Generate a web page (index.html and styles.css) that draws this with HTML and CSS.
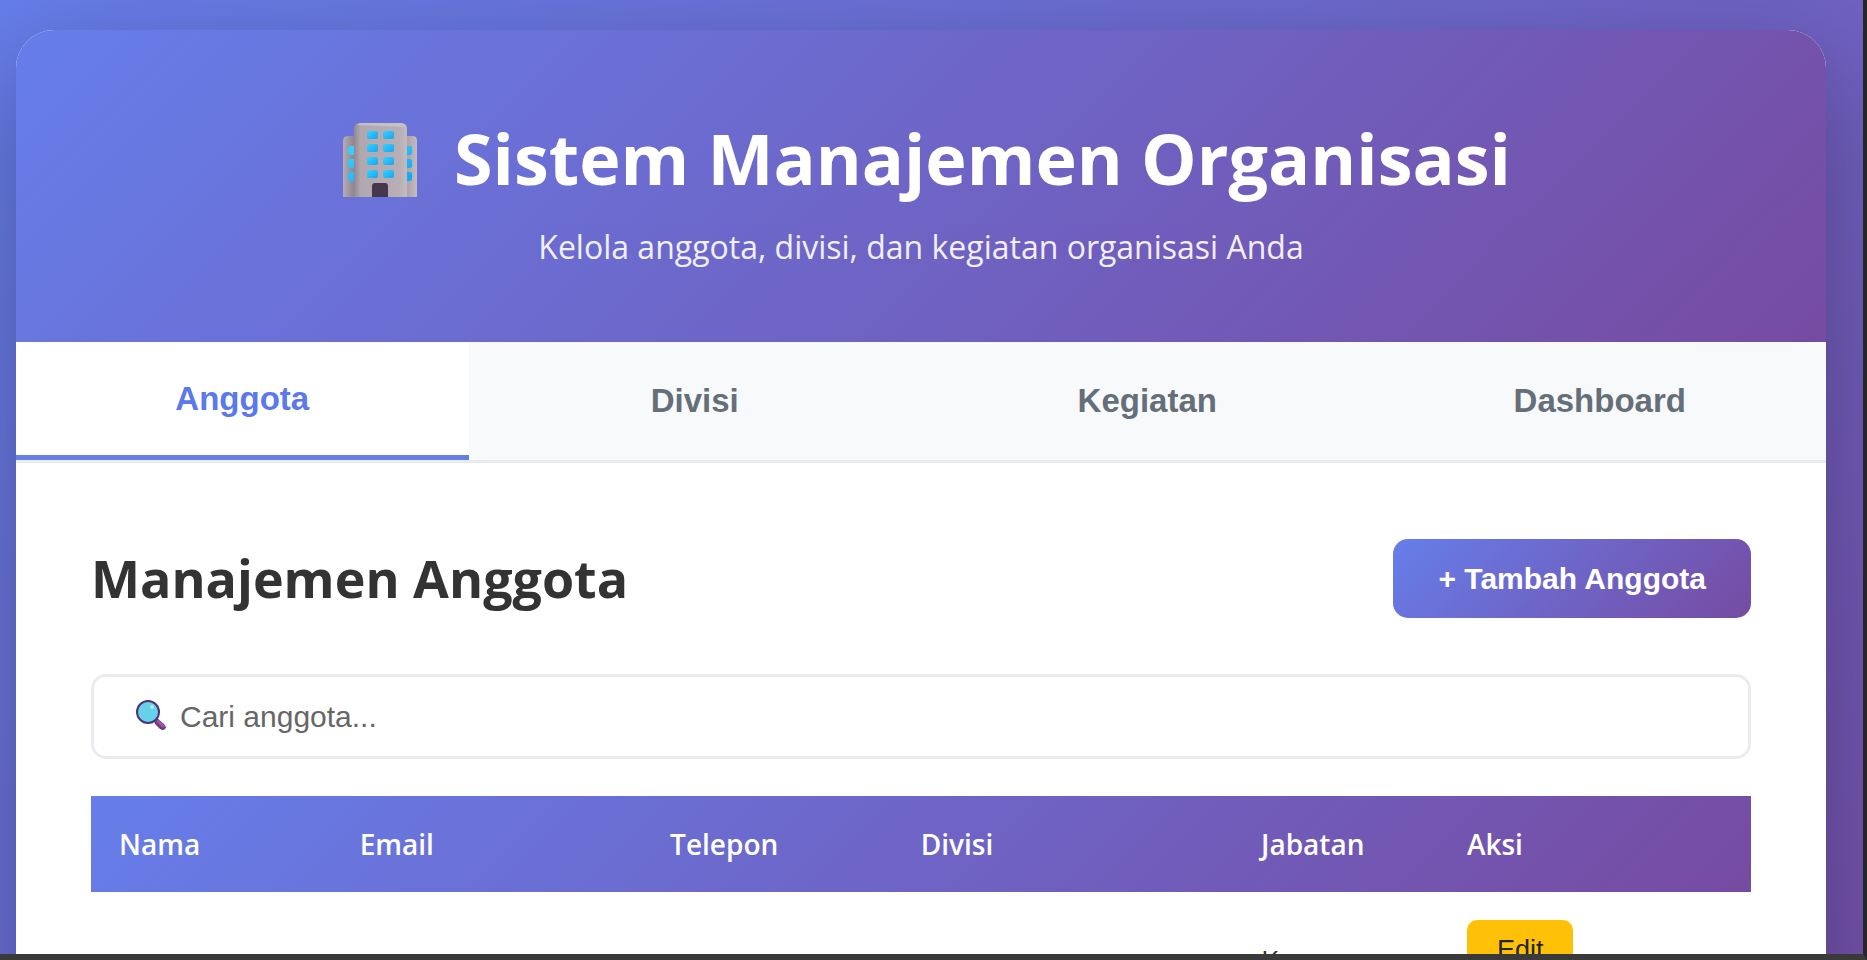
FILE: index.html
```html
<!DOCTYPE html>
<html lang="id">
<head>
<meta charset="utf-8">
<title>Sistem Manajemen Organisasi</title>
<link rel="stylesheet" href="styles.css">
</head>
<body>
<div class="window">
  <div class="page">
  <div class="container">
    <header class="header">
      <h1 class="title">
        <svg class="building" viewBox="0 0 75 75" aria-hidden="true">
          <defs>
            <linearGradient id="wall" x1="0" x2="1" y1="0" y2="0">
              <stop offset="0" stop-color="#8f8794"/><stop offset=".12" stop-color="#b0a7af"/><stop offset=".85" stop-color="#b7aeb6"/><stop offset="1" stop-color="#c2bcc0"/>
            </linearGradient>
            <linearGradient id="side" x1="0" x2="1" y1="0" y2="0">
              <stop offset="0" stop-color="#b4adb3"/><stop offset=".15" stop-color="#8d8590"/><stop offset=".85" stop-color="#a8a0a8"/><stop offset="1" stop-color="#c2bcc0"/>
            </linearGradient>
            <linearGradient id="glass" x1="0" x2="1" y1="0" y2="1">
              <stop offset="0" stop-color="#3cd0ff"/><stop offset="1" stop-color="#12a6f4"/>
            </linearGradient>
          </defs>
          <path d="M0 74V18q0-5 5-5h65q4 0 4 5v56z" fill="url(#side)"/>
          <g fill="url(#glass)">
            <path d="M12 23H8q-3 0-3 3v3q0 3 3 3h4zM12 36H8q-3 0-3 3v3q0 3 3 3h4zM12 49H8q-3 0-3 3v3q0 3 3 3h4zM64 23h3q2 0 2 2v5q0 2-2 2h-3zM64 36h3q2 0 2 2v5q0 2-2 2h-3zM64 49h3q2 0 2 2v5q0 2-2 2h-3z"/>
          </g>
          <path d="M11 74V6q0-6 6-6h41q6 0 6 6v68z" fill="url(#wall)"/>
          <path d="M14 2q2-2 5-2h38q4 0 6 4z" fill="#c6c0c4"/>
          <g fill="url(#glass)">
            <rect x="24" y="8" width="11" height="8" rx="2"/><rect x="40" y="8" width="11" height="8" rx="2"/>
            <rect x="24" y="21" width="11" height="8" rx="2"/><rect x="40" y="21" width="11" height="8" rx="2"/>
            <rect x="24" y="34" width="11" height="8" rx="2"/><rect x="40" y="34" width="11" height="8" rx="2"/>
            <rect x="24" y="47" width="11" height="8" rx="2"/><rect x="40" y="47" width="11" height="8" rx="2"/>
          </g>
          <path d="M29 74V63q0-3 3-3h10q3 0 3 3v11z" fill="#46384c"/>
        </svg>
        <span>Sistem Manajemen Organisasi</span>
      </h1>
      <p class="subtitle">Kelola anggota, divisi, dan kegiatan organisasi Anda</p>
    </header>
    <nav class="tabs">
      <button class="tab tab-active" type="button">Anggota</button>
      <button class="tab" type="button">Divisi</button>
      <button class="tab" type="button">Kegiatan</button>
      <button class="tab" type="button">Dashboard</button>
    </nav>
    <main class="content">
      <div class="section-header">
        <h2 class="section-title">Manajemen Anggota</h2>
        <button class="add-button" type="button">+ Tambah Anggota</button>
      </div>
      <div class="search">
        <svg class="search-icon" viewBox="0 0 30 30" aria-hidden="true">
          <path d="M18 21l3-3 7 6q3 3 1 5-2 2-5 0l-5-5z" fill="#6e3d7e"/>
          <path d="M22 21l5 5" stroke="#965b9e" stroke-width="3" stroke-linecap="round"/>
          <circle cx="12" cy="12" r="11" fill="#65d2ea" stroke="#4d3379" stroke-width="2"/>
          <circle cx="16" cy="7" r="2" fill="#b4e8f5"/>
        </svg>
        <input class="search-input" type="text" placeholder="Cari anggota..." aria-label="Cari anggota">
      </div>
      <table class="members">
        <thead>
          <tr>
            <th class="col-name">Nama</th>
            <th class="col-email">Email</th>
            <th class="col-phone">Telepon</th>
            <th class="col-division">Divisi</th>
            <th class="col-position">Jabatan</th>
            <th class="col-action">Aksi</th>
          </tr>
        </thead>
        <tbody>
          <tr>
            <td></td><td></td><td></td><td></td>
            <td>K</td>
            <td class="actions"><button class="edit-button" type="button">Edit</button></td>
          </tr>
        </tbody>
      </table>
    </main>
  </div>
  </div>
</div>
</body>
</html>
```
FILE: styles.css
```css
* {
  box-sizing: border-box;
  margin: 0;
  padding: 0;
}

:root {
  --brand: linear-gradient(135deg, #667eea 0%, #764ba2 100%);
  --ui: "Liberation Sans", Arial, sans-serif;
}

body {
  font-family: "Open Sans", "Noto Sans", sans-serif;
  color: #333;
  background: #3a3a3a;
}

.window {
  height: 100vh;
  overflow: hidden;
  border-right: 4px solid #262626;
  border-bottom: 6px solid #3a3a3a;
}

.page {
  display: flex;
  min-height: 150vh;
  padding: 30px 37px 0 16px;
  background: var(--brand);
}

.container {
  flex: 1;
  overflow: hidden;
  border-radius: 38px 38px 0 0;
  background: #fff;
  box-shadow: 0 38px 112px rgba(0, 0, 0, 0.3);
}

.header {
  padding: 75px 56px;
  text-align: center;
  color: #fff;
  background: var(--brand);
}

.title {
  display: flex;
  justify-content: center;
  align-items: center;
  gap: 36px;
  margin-bottom: 16px;
  padding-left: 12px;
  font-size: 70px;
  line-height: 106px;
  font-weight: 700;
}

.building {
  width: 75px;
  height: 75px;
  margin-top: 4px;
}

.subtitle {
  font-size: 32px;
  line-height: 40px;
  opacity: 0.9;
}

.tabs {
  display: flex;
  border-bottom: 3px solid #e9ecef;
  background: #f8f9fa;
}

.tab {
  flex: 1;
  height: 118px;
  border: none;
  font: 700 33px/40px var(--ui);
  color: #646f79;
  background: transparent;
}

.tab-active {
  border-bottom: 5px solid #667eea;
  color: #5b79ea;
  background: #fff;
}

.content {
  padding: 75px;
}

.section-header {
  display: flex;
  justify-content: space-between;
  align-items: center;
  margin-bottom: 56px;
}

.section-title {
  font-size: 52px;
  line-height: 80px;
  font-weight: 700;
}

.add-button {
  padding: 20px 45px;
  border: none;
  border-radius: 15px;
  font: 700 30px/39px var(--ui);
  color: #fff;
  background: var(--brand);
}

.search {
  position: relative;
  margin-bottom: 37px;
}

.search-icon {
  position: absolute;
  left: 45px;
  top: 26px;
  width: 30px;
  height: 30px;
}

.search-input {
  display: block;
  width: 100%;
  height: 85px;
  padding: 0 45px 0 86px;
  border: 3px solid #e9ecef;
  border-radius: 15px;
  font: 400 30px/36px var(--ui);
  color: #333;
  background: #fff;
}

.search-input::placeholder {
  color: #666;
}

.members {
  width: 100%;
  table-layout: fixed;
  border-collapse: collapse;
}

.members thead {
  background: var(--brand);
}

.members th {
  height: 96px;
  padding: 0 28px;
  text-align: left;
  font-size: 28px;
  font-weight: 600;
  line-height: 40px;
  color: #fff;
}

.members td {
  height: 136px;
  padding: 28px;
  font-size: 28px;
  line-height: 40px;
}

.members .actions {
  vertical-align: top;
}

.col-name { width: 14.5%; }
.col-email { width: 18.7%; }
.col-phone { width: 15.1%; }
.col-division { width: 20.5%; }
.col-position { width: 12.4%; }
.col-action { width: 18.8%; }

.edit-button {
  display: block;
  padding: 15px 30px;
  border: none;
  border-radius: 10px;
  font: 400 27px/30px var(--ui);
  color: #212529;
  background: #ffc107;
}
```
